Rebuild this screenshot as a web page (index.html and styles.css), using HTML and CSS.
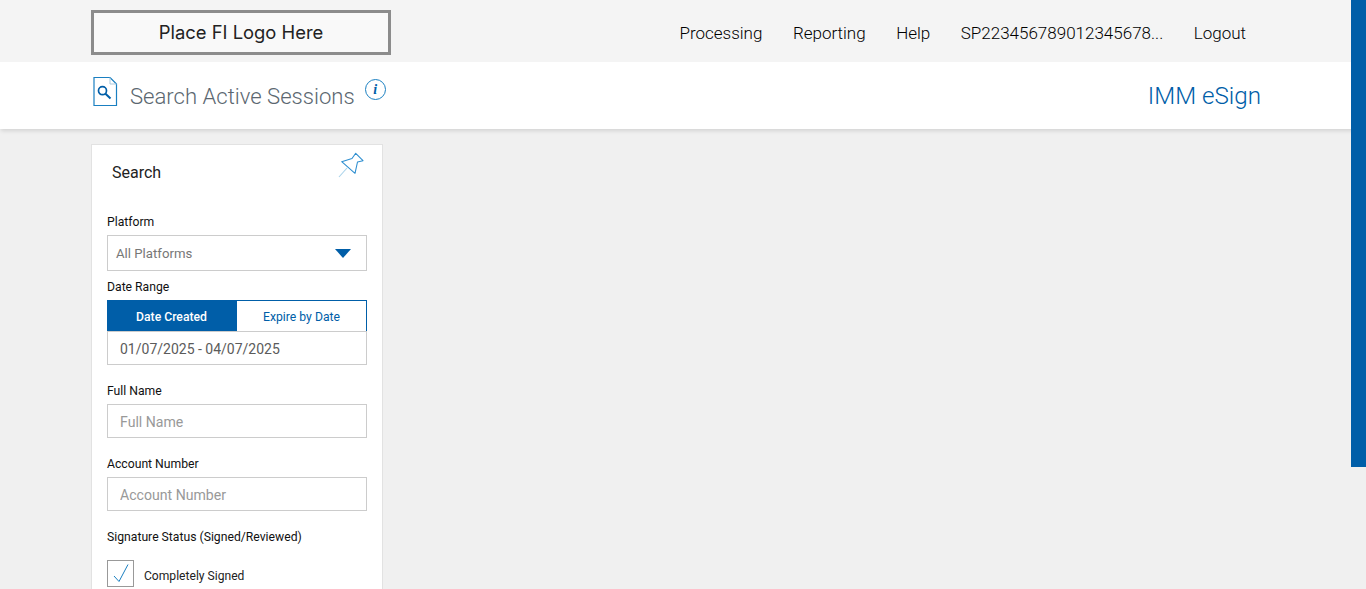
FILE: index.html
```html
<!DOCTYPE html>
<html lang="en">
<head>
    <meta charset="UTF-8">
    <meta name="viewport" content="width=device-width, initial-scale=1.0">
    <title>Search Active Sessions</title>
    <link rel="stylesheet" href="styles.css">
</head>
<body>
    <div class="side-bar"></div>

    <!-- Top navigation -->
    <header class="top-bar">
        <div class="container top-inner">
            <div class="logo-box">Place FI Logo Here</div>
            <nav class="top-nav">
                <a href="#">Processing</a>
                <a href="#">Reporting</a>
                <a href="#">Help</a>
                <a href="#" class="user-name">SP223456789012345678...</a>
                <a href="#">Logout</a>
            </nav>
        </div>
    </header>

    <!-- Page title -->
    <div class="title-bar">
        <div class="container title-inner">
            <div class="title-left">
                <svg class="doc-icon" width="25" height="30" viewBox="0 0 25 30" fill="none">
                    <path d="M1 0.5H17L23.5 7V28.5H1Z" stroke="#1a7fc1" stroke-width="1.2"/>
                    <path d="M17 0.5V7H23.5" stroke="#a9c9de" stroke-width="1"/>
                    <circle cx="9.5" cy="13.7" r="4" stroke="#005ea8" stroke-width="1.7"/>
                    <path d="M12.5 16.7L17.5 21.5" stroke="#005ea8" stroke-width="2"/>
                </svg>
                <h1 class="page-title">Search Active Sessions</h1>
                <span class="info-icon">i</span>
            </div>
            <div class="app-name">IMM eSign</div>
        </div>
    </div>

    <div class="container">
        <!-- Search panel -->
        <section class="search-panel">
            <div class="panel-head">
                <h2>Search</h2>
                <svg class="pin-icon" width="28" height="27" viewBox="0 0 28 27" fill="none">
                    <path d="M19.7 1.3L27 8.7L21.5 10L19 21.3L5.7 9.7L16 6.5Z" stroke="#2f8fd0" stroke-width="1.1" stroke-linejoin="round"/>
                    <path d="M11 16L3 25" stroke="#a9d3ea" stroke-width="1.1"/>
                </svg>
            </div>

            <label class="field-label">Platform</label>
            <div class="select-box">
                <span>All Platforms</span>
                <span class="caret"></span>
            </div>

            <label class="field-label range-label">Date Range</label>
            <div class="tabs">
                <button class="tab active">Date Created</button>
                <button class="tab">Expire by Date</button>
            </div>
            <div class="date-box">01/07/2025 - 04/07/2025</div>

            <label class="field-label name-label">Full Name</label>
            <input class="text-input" type="text" placeholder="Full Name">

            <label class="field-label account-label">Account Number</label>
            <input class="text-input" type="text" placeholder="Account Number">

            <label class="field-label status-label">Signature Status (Signed/Reviewed)</label>
            <div class="check-row">
                <span class="check-box">
                    <svg width="26" height="26" viewBox="0 0 26 26" fill="none">
                        <path d="M6 15L11 20.5L20 3.5" stroke="#1a7fc1" stroke-width="1"/>
                    </svg>
                </span>
                <span class="check-text">Completely Signed</span>
            </div>
        </section>
    </div>
</body>
</html>
```

FILE: styles.css
```css
html, body {
    height: 589px;
    overflow: hidden;
}
body {
    margin: 0;
    background: #f0f0f0;
    font-family: Roboto, Arial, sans-serif;
    color: #111;
}
.container {
    width: 1170px;
    margin-left: 91px;
}
.side-bar {
    position: absolute;
    top: 0;
    right: 0;
    z-index: 5;
    width: 15px;
    height: 467px;
    background: #005ea8;
}
.top-bar {
    height: 62px;
    background: #f4f4f4;
}
.top-inner {
    display: flex;
    justify-content: space-between;
    padding-top: 10px;
    box-sizing: border-box;
}
.logo-box {
    box-sizing: border-box;
    width: 300px;
    height: 45px;
    border: 3px solid #8c8c8c;
    background: #f9f9f9;
    color: #222;
    font-family: Inter, Arial, sans-serif;
    font-size: 18.4px;
    line-height: 39px;
    text-align: center;
}
.top-nav {
    display: flex;
    gap: 30.5px;
    padding: 13px 15px 0 0;
}
.top-nav a {
    color: #000;
    text-decoration: none;
    font-size: 17px;
    font-weight: 300;
    line-height: 20px;
}
.title-bar {
    position: relative;
    height: 67px;
    background: #fff;
    box-shadow: 0 3px 4px -1px rgba(0, 0, 0, 0.12);
}
.title-inner {
    display: flex;
    justify-content: space-between;
}
.title-left {
    display: flex;
    align-items: flex-start;
}
.doc-icon {
    margin: 15px 0 0 2px;
}
.page-title {
    margin: 20px 0 0 12px;
    font-size: 22.1px;
    font-weight: 300;
    line-height: 28px;
    color: #5b6770;
}
.info-icon {
    box-sizing: border-box;
    width: 21px;
    height: 21px;
    margin: 17px 0 0 10px;
    border: 1px solid #1a7fc1;
    border-radius: 50%;
    color: #005ea8;
    font-family: "Liberation Serif", serif;
    font-size: 14px;
    font-weight: bold;
    font-style: italic;
    line-height: 19px;
    text-align: center;
}
.app-name {
    margin-top: 20px;
    font-size: 24.2px;
    font-weight: 300;
    line-height: 28px;
    color: #005ea8;
}
.search-panel {
    box-sizing: border-box;
    width: 292px;
    height: 460px;
    margin-top: 15px;
    padding: 0 15px;
    background: #fff;
    border: 1px solid #e2e2e2;
}
.panel-head {
    position: relative;
    height: 69px;
}
.panel-head h2 {
    margin: 0;
    padding: 18px 0 0 5px;
    font-size: 16px;
    font-weight: 400;
    line-height: 19px;
    color: #222;
}
.pin-icon {
    position: absolute;
    top: 7px;
    right: 3px;
}
.field-label {
    display: block;
    font-size: 12.2px;
    line-height: 16px;
    color: #111;
}
.select-box {
    box-sizing: border-box;
    display: flex;
    justify-content: space-between;
    align-items: center;
    width: 260px;
    height: 36px;
    margin-top: 5px;
    padding: 0 15px 0 8px;
    border: 1px solid #ccc;
    font-size: 13.2px;
    color: #777;
}
.caret {
    width: 0;
    height: 0;
    border-left: 8px solid transparent;
    border-right: 8px solid transparent;
    border-top: 9px solid #005ea8;
}
.range-label {
    margin-top: 8px;
}
.tabs {
    display: flex;
    width: 260px;
    margin-top: 5px;
}
.tab {
    box-sizing: border-box;
    width: 130px;
    height: 31px;
    padding: 2px 0 0;
    background: #fff;
    border: 1px solid #005ea8;
    border-left: none;
    border-bottom: none;
    color: #005ea8;
    font-family: Roboto, Arial, sans-serif;
    font-size: 12.2px;
}
.tab.active {
    background: #005ea8;
    color: #fff;
    font-weight: 500;
}
.date-box {
    box-sizing: border-box;
    width: 260px;
    height: 34px;
    padding-left: 12px;
    border: 1px solid #ccc;
    font-size: 14px;
    line-height: 35px;
    color: #5b5b5b;
}
.name-label {
    margin-top: 18px;
}
.account-label {
    margin-top: 18px;
}
.text-input {
    box-sizing: border-box;
    display: block;
    width: 260px;
    height: 34px;
    margin-top: 5px;
    padding: 2px 12px 0;
    border: 1px solid #ccc;
    border-radius: 0;
    font-family: Roboto, Arial, sans-serif;
    font-size: 14.1px;
}
.text-input::placeholder {
    color: #999;
}
.status-label {
    margin-top: 18px;
}
.check-row {
    display: flex;
    align-items: center;
    gap: 10px;
    margin-top: 15px;
    font-size: 12.1px;
    color: #222;
}
.check-box {
    box-sizing: border-box;
    width: 27px;
    height: 27px;
    border: 1px solid #999;
}
.check-box svg {
    display: block;
}
.check-text {
    padding-top: 5px;
}
```
